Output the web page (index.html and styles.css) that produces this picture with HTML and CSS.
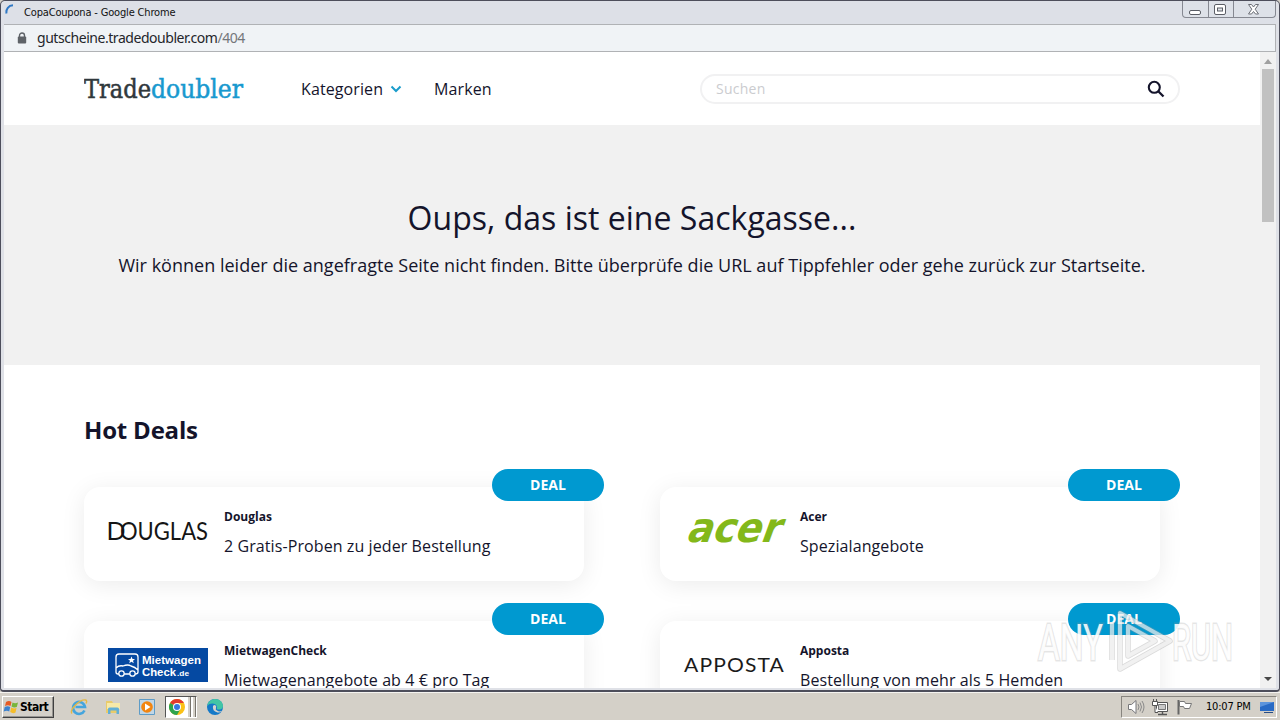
FILE: index.html
```html
<!DOCTYPE html>
<html lang="de">
<head>
<meta charset="utf-8">
<title>CopaCoupona</title>
<link rel="stylesheet" href="styles.css">
</head>
<body>
<div class="desktop">
  <div class="window">
    <div class="titlebar">
      <svg class="spinner" width="10" height="12" viewBox="0 0 10 12"><path d="M1.500 9.500C.8 5 3.500 1.500 8 1.300" fill="none" stroke="#2f78c4" stroke-width="2"/></svg>
      <span class="window-title">CopaCoupona - Google Chrome</span>
      <div class="window-buttons">
        <span class="wbtn"><svg width="25" height="17"><rect x="6.500" y="9.500" width="11" height="4" rx="1.500" fill="#fff" stroke="#5b5e66"/></svg></span>
        <span class="wbtn"><svg width="25" height="17"><rect x="5.500" y="3.500" width="11" height="10" rx="1.500" fill="#fff" stroke="#5b5e66"/><rect x="8.500" y="7" width="5" height="3" fill="#dfe3e8" stroke="#5b5e66"/></svg></span>
        <span class="wbtn wide"><svg width="41" height="17"><path d="M14.500 3.500h3l2 2.500 2-2.500h3l-3.300 4.700 3.300 4.800h-3l-2-2.500-2 2.500h-3l3.300-4.800z" fill="#fff" stroke="#6b6e76"/></svg></span>
      </div>
    </div>
    <div class="addressbar">
      <svg width="10" height="12" viewBox="0 0 10 12"><path d="M2.500 5V3.500a2.500 2.500 0 0 1 5 0V5" fill="none" stroke="#5f6368" stroke-width="1.400"/><rect x=".8" y="4.500" width="8.400" height="7" rx="1" fill="#5f6368"/></svg>
      <span class="url">gutscheine.tradedoubler.com<span class="path">/404</span></span>
    </div>
    <div class="content">
      <main class="page">
        <header class="header">
          <svg class="logo" width="160" height="32"><text y="25" font-size="26" x="0" textLength="67" lengthAdjust="spacingAndGlyphs" fill="#30383c" stroke="#30383c">Trade</text><text y="25" font-size="26" x="67" textLength="92" lengthAdjust="spacingAndGlyphs" fill="#1899cf" stroke="#1899cf">doubler</text></svg>
          <nav class="nav">
            <a>Kategorien</a>
            <svg class="chev" width="12" height="8"><path d="M1.500 1.500 6 6l4.500-4.500" fill="none" stroke="#1a9ccb" stroke-width="2"/></svg>
            <a>Marken</a>
          </nav>
          <div class="search"><span class="placeholder">Suchen</span><svg width="18" height="18"><circle cx="7.300" cy="7.300" r="5.500" fill="none" stroke="#14142b" stroke-width="2.100"/><path d="m11.500 11.500 5 5" stroke="#14142b" stroke-width="2.300"/></svg></div>
        </header>
        <section class="hero">
          <h1>Oups, das ist eine Sackgasse...</h1>
          <p>Wir können leider die angefragte Seite nicht finden. Bitte überprüfe die URL auf Tippfehler oder gehe zurück zur Startseite.</p>
        </section>
        <section class="deals">
          <h2>Hot Deals</h2>
          <div class="grid">
            <article class="card"><span class="badge">DEAL</span>
              <svg class="brand" width="102" height="46"><text class="douglas" y="32" font-size="25"><tspan x="-1.500">D</tspan><tspan x="12" textLength="88" lengthAdjust="spacingAndGlyphs">OUGLAS</tspan></text></svg>
              <div class="info"><h3>Douglas</h3><p>2 Gratis-Proben zu jeder Bestellung</p></div></article>
            <article class="card"><span class="badge">DEAL</span>
              <svg class="brand" width="102" height="46"><text class="acer" transform="translate(1 33.500) skewX(-20)" font-size="41" textLength="93" lengthAdjust="spacingAndGlyphs">acer</text></svg>
              <div class="info"><h3>Acer</h3><p>Spezialangebote</p></div></article>
            <article class="card"><span class="badge">DEAL</span>
              <svg class="brand" width="102" height="46"><rect y="6" width="100" height="34" fill="#0549a2"/><g fill="none" stroke="#fff" stroke-width="1.300"><path d="M10.800 32H10Q8 32 8 30V15Q8 12 11 12H27Q30 12 30 15V30Q30 32 27.200 32M16.200 32h5.600M8 26q3-3 7-2 5-2 8 0 4 1 7 4"/><circle cx="13.500" cy="31.500" r="2.700"/><circle cx="24.500" cy="31.500" r="2.700"/></g><path d="m23.500 14.500 1 2.500h2.500l-2 1.700.8 2.600-2.300-1.500-2.300 1.500.8-2.600-2-1.700h2.500z" fill="#fff"/><text class="miet" x="34" y="22" font-size="11.500" textLength="59" lengthAdjust="spacingAndGlyphs">Mietwagen</text><text class="miet" x="34" y="33.500" font-size="11.500" textLength="34" lengthAdjust="spacingAndGlyphs">Check</text><text class="miet" x="69" y="33.500" font-size="8" textLength="12" lengthAdjust="spacingAndGlyphs">.de</text></svg>
              <div class="info"><h3>MietwagenCheck</h3><p>Mietwagenangebote ab 4 € pro Tag</p></div></article>
            <article class="card"><span class="badge">DEAL</span>
              <svg class="brand" width="102" height="46"><text class="apposta" x="0" y="30" font-size="18.500" letter-spacing="1" textLength="101" lengthAdjust="spacingAndGlyphs">APPOSTA</text></svg>
              <div class="info"><h3>Apposta</h3><p>Bestellung von mehr als 5 Hemden</p></div></article>
          </div>
        </section>
      </main>
      <div class="scrollbar">
        <svg width="16" height="17"><path d="M4 12h8L8 7z" fill="#a0a0a0"/></svg>
        <div class="thumb"></div>
        <svg class="down" width="16" height="17"><path d="M4 6h8l-4 4z" fill="#484848"/></svg>
      </div>
    </div>
  </div>
  <footer class="taskbar">
    <div class="start">
      <svg width="17" height="16" viewBox="0 0 17 16"><path d="M3 3q3-2 5.500 0L7.500 7Q5 5.500 2 7z" fill="#e65b25"/><path d="M9.500 3.500Q12 5 15 3.500L13.800 8Q11 9 8.500 7.500z" fill="#79b53c"/><path d="M1.700 8q3-1.500 5.500 0l-1 4.500Q4 11 .7 12.500z" fill="#3c82cf"/><path d="M8.200 8.500Q11 10 13.500 9l-1 4.500Q10 15 7.200 13z" fill="#f5bd29"/></svg>
      <span>Start</span>
    </div>
    <div class="quick">
      <svg width="18" height="18" viewBox="0 0 18 18"><path d="M14.500 12.500A6 6 0 1 1 15 9H5.500" fill="none" stroke="#45a5dd" stroke-width="2.600"/><path d="M2 15.500C-1 12 10 1 15.500 2q2 .5 .5 3.500" fill="none" stroke="#e5b844" stroke-width="1.400"/></svg>
      <svg width="18" height="18" viewBox="0 0 18 18"><path d="M2 3h6l1 2h6v10H2z" fill="#e9cb6a"/><path d="M3 5h13v6H3z" fill="#f7e9a8"/><path d="M4 16v-5q0-1.500 1.500-1.500h8Q15 9.500 15 11v5h-2.500v-3.500h-6V16z" fill="#62afd6"/></svg>
      <svg width="18" height="18" viewBox="0 0 18 18"><path d="M1.500 1.500h15v15h-15z" fill="#c0d6e6" stroke="#5e9cc7"/><circle cx="9" cy="9" r="5.800" fill="#f28510"/><path d="m7 5.500 5.500 3.500L7 12.500z" fill="#fff"/></svg>
      <div class="task-chrome">
        <svg width="18" height="18" viewBox="0 0 18 18"><circle cx="9" cy="9" r="8" fill="#fbc116"/><path d="M9 9 2.070 5A8 8 0 0 1 15.930 5H9z" fill="#e33b2e"/><path d="M9 9 2.070 5A8 8 0 0 0 9 17l3.500-6z" fill="#2da44e"/><circle cx="9" cy="9" r="4" fill="#fff"/><circle cx="9" cy="9" r="3" fill="#3878e0"/></svg>
        <i></i><i></i>
      </div>
      <svg width="18" height="18" viewBox="0 0 18 18"><circle cx="9" cy="9" r="8" fill="#1579c8"/><path d="M1.200 8C2 3 6 1 9 1c5 0 8 3.500 8 7 0 3-3 4-5.500 3.500-1.500-.5 0-1.500-.5-3C10 5 4 4 1.200 8z" fill="#42c5a5"/><path d="M7 8q-1 5 4.500 6.500 3 .5 4.500-1.500-3 1-5-.5-2-1-1-2.500 1-2-1-3-1.500 0-2 1z" fill="#d6d3cd"/></svg>
    </div>
    <div class="tray">
      <svg width="18" height="18" viewBox="0 0 18 18"><path d="M1.500 6.500h3L9 2.500v13l-4.500-4h-3z" fill="#fff" stroke="#77777a"/><path d="M11 6q2 3 0 6M13 4.500q3 4.500 0 9M15 3q4 6 0 12" fill="none" stroke="#8a8a8a"/></svg>
      <svg width="18" height="18" viewBox="0 0 18 18"><path d="M5.500 4.500h11v9h-11z" fill="#fff" stroke="#555"/><path d="M7.500 6.500h7v5h-7z" fill="#c9c9c9" stroke="#777"/><path d="M7 16.500h9M11.500 14v2" fill="none" stroke="#555" stroke-width="1.400"/><path d="M1.500 3.500h5v4h-5zM2.500 1v2.500M5.500 1v2.500M4 7.500v7h3" fill="#fff" stroke="#555"/></svg>
      <svg width="18" height="18" viewBox="0 0 18 18"><path d="M3.500 2v14.500" stroke="#666" stroke-width="2"/><path d="M4.500 3.500h5l1 2h6l-2 5h-5l-1-2h-4z" fill="#fff" stroke="#777"/></svg>
      <span class="clock">10:07 PM</span>
      <svg width="18" height="18" viewBox="0 0 18 18"><path d="M2 4h14v9H2z" fill="#286ac5"/><path d="M2 4h14L2 9z" fill="#5c94dc"/><path d="M6 14h9v1H6z" fill="#284d85"/></svg>
    </div>
  </footer>
  <svg class="watermark" width="204" height="72" aria-hidden="true">
    <g font-size="50" fill="none" stroke="#999" stroke-opacity=".25" stroke-width="3"><text x="2" y="54" textLength="65" lengthAdjust="spacingAndGlyphs" fill="#fff" fill-opacity=".9" paint-order="stroke">ANY</text><text x="136" y="54" textLength="61" lengthAdjust="spacingAndGlyphs" fill="#fff" fill-opacity=".9" paint-order="stroke">RUN</text></g>
    <path d="M76 16v38M84 7v56l50-28zM92 20v30l27-15z" fill="none" stroke="#999" stroke-opacity=".35" stroke-width="5.500" stroke-linejoin="round"/>
    <path d="M76 16v38M84 7v56l50-28zM92 20v30l27-15z" fill="none" stroke="#fff" stroke-opacity=".6" stroke-width="4" stroke-linejoin="round"/>
  </svg>
</div>
</body>
</html>
```
FILE: styles.css
```css
*{box-sizing:border-box}
body{margin:0;font-family:"Open Sans",sans-serif;color:#14142b}
h1,h2,h3,p{margin:0;font-weight:400}
svg{display:block;flex:none}
.desktop{position:relative;width:1280px;height:720px;overflow:hidden;background:#d4d0c8;display:flex;flex-direction:column}
.window{height:692px;display:flex;flex-direction:column;border:1px solid #4d4e5b;border-bottom-width:2px;border-radius:5px 5px 4px 4px;background:#dfe1e7;padding:0 3px 2px}
.titlebar{height:23px;flex:none;display:flex;align-items:flex-start;background:#dde0e7}
.spinner{margin:3px 0 0 1px}
.window-title{margin:3px 0 0 9px;font:11px/17px "DejaVu Sans Condensed","DejaVu Sans",sans-serif;letter-spacing:-.17px;color:#111;white-space:nowrap}
.window-buttons{margin-left:auto;display:flex;border:1px solid #858891;border-top:0;border-radius:0 0 4px 4px;height:17px;background:#dde1e8}
.wbtn{width:25px;overflow:hidden}
.wbtn+.wbtn{border-left:1px solid #858891}
.wbtn.wide{width:42px}
.addressbar{height:28px;flex:none;display:flex;align-items:center;gap:10px;padding-left:13px;background:#f0f3f6;border:1px solid #b0b2b5;border-left-width:0}
.url{font:14px/20px "Noto Sans",sans-serif;letter-spacing:-.45px;color:#24262a;white-space:nowrap}
.path{color:#74777b}
.content{flex:1;min-height:0;display:flex;background:#fff}
.page{width:1256px;height:100%;overflow:hidden;background:#fff}
.header{height:73px;display:flex;align-items:center;padding:0 80px}
.logo{font-family:"DejaVu Serif Condensed","DejaVu Serif",serif;stroke-width:.5px}
.nav{display:flex;align-items:center;margin-left:57px;font-size:16px;letter-spacing:.1px}
.chev{margin:0 32px 0 7px}
.search{margin-left:auto;width:480px;height:30px;border:2px solid #f1f1f2;border-radius:15px;display:flex;align-items:center;justify-content:space-between;padding:0 13px 0 14px;font-size:14px;letter-spacing:.25px;color:#cbcccf}
.hero{height:240px;background:#f1f1f1;text-align:center;padding-top:70px;white-space:nowrap}
.hero h1{font-size:32px;line-height:46px;letter-spacing:.02px}
.hero p{font-size:18px;line-height:28px;margin-top:10px;letter-spacing:.015px}
.deals{padding:49px 80px 0}
.deals h2{font-size:24px;line-height:32px;font-weight:700;letter-spacing:-.2px}
.grid{display:grid;grid-template-columns:500px 500px;column-gap:76px;row-gap:40px;margin-top:41px}
.card{position:relative;height:94px;border-radius:16px;background:#fff;box-shadow:0 4px 24px rgba(0,0,0,.08);padding:21px 24px;display:flex;gap:14px}
.brand{overflow:visible}
.info{white-space:nowrap}
.info h3{font-size:12px;line-height:18px;font-weight:700}
.info p{font-size:16px;line-height:24px;margin-top:8px;letter-spacing:.09px}
.badge{position:absolute;right:-20px;top:-18px;width:112px;height:32px;border-radius:16px;background:#0099d0;color:#fff;font-weight:700;font-size:14px;line-height:32px;text-align:center}
.douglas{font-family:Lato,sans-serif;fill:#151515}
.acer{font-family:"DejaVu Sans",sans-serif;font-weight:700;fill:#83b81a}
.miet{font-family:"Liberation Sans",sans-serif;font-weight:700;fill:#fff}
.apposta{font-family:Lato,sans-serif;fill:#1b1b1b}
.scrollbar{width:16px;flex:none;background:#f1f1f1;display:flex;flex-direction:column;align-items:center}
.thumb{width:12px;height:153px;background:#c1c1c1}
.down{margin-top:auto}
.taskbar{height:28px;flex:none;display:flex;align-items:center;background:#d4d0c8;border-top:1px solid #f4f3f0;padding:2px 3px 2px 2px}
.start{width:52px;height:22px;display:flex;align-items:center;gap:0;border:1px solid;border-color:#fff #404040 #404040 #fff;box-shadow:inset -1px -1px #969490;font:700 12px "DejaVu Sans Condensed",sans-serif;letter-spacing:-.5px;color:#000}
.quick{display:flex;align-items:center;gap:16px;margin-left:16px}
.task-chrome{width:32px;height:22px;margin-left:-7px;margin-right:-7px;display:flex;align-items:center;padding-left:2px;gap:2px;background:#fff;border:1px solid #555;border-right-color:#fff;border-bottom-color:#fff}
.task-chrome i{width:3px;height:20px;border-right:1px solid #77736c;background:#d4d0c8}
.tray{margin-left:auto;width:156px;height:22px;display:flex;align-items:center;gap:6px;padding-left:5px;border:1px solid;border-color:#88857f #fff #fff #88857f}
.clock{width:47px;margin:0 0 0 7px;font:11px "DejaVu Sans Condensed",sans-serif;letter-spacing:-.2px;color:#000;white-space:nowrap}
.watermark{position:absolute;left:1036px;top:606px;font-family:"Roboto",sans-serif}
```
